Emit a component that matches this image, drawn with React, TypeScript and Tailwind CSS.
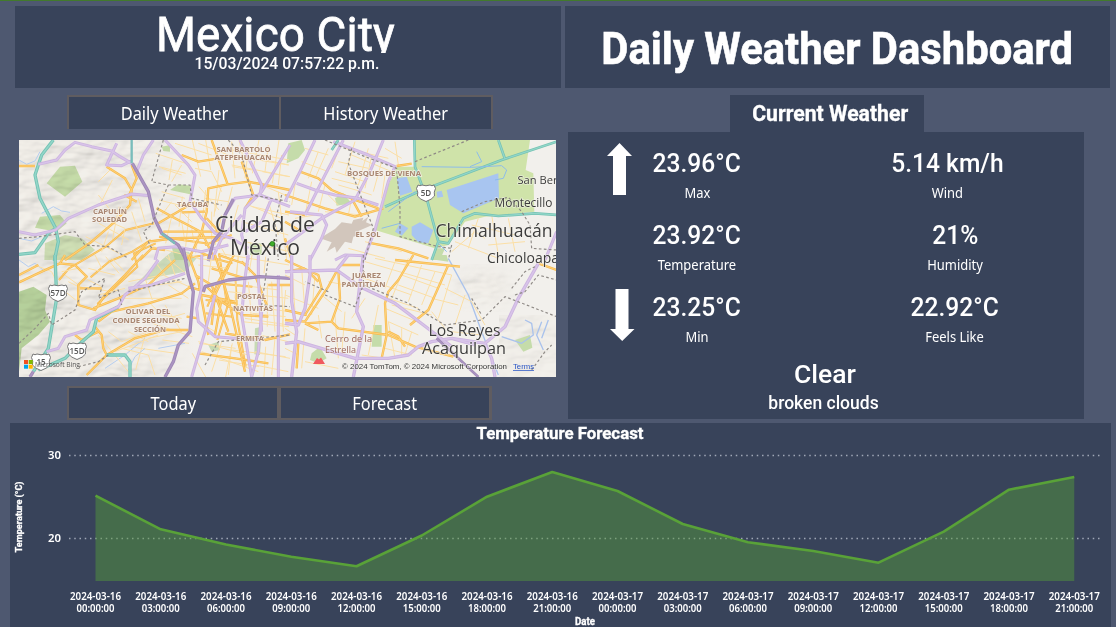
import React from "react";

const DIN = "font-[Roboto,sans-serif]";

const temps = [495.7, 529.3, 544.5, 556.7, 566.3, 535.5, 496.7, 472, 491, 524, 542.3, 551, 562.7, 531.7, 489.7, 477];
const hours = ["00", "03", "06", "09", "12", "15", "18", "21"];

type Stroke = { d: string; c: string; w: number; dash?: string };

const O = "#f8ba4c";
const L = "#cdb4e0";
const P = "#9f88b6";
const T = "#74c2b3";
const G = "#8f8a86";
const Y = "#fbdfa6";

const cores: Record<string, string> = {
  [O]: "#fdd078",
  [L]: "#d8c4e9",
  [P]: "#ab95c2",
  [T]: "#93d6c9",
};

const centre: Stroke[] = [
  { c: Y, w: 3, d: "M520 0L545 110M560 0L575 90M600 90L585 230M540 140L600 210M640 140L620 220M660 0L690 130M720 0L700 100M780 0L760 130M740 60L810 75M730 95L810 110M640 30L810 60M640 80L700 90M740 140L810 170M700 200L810 225M620 235L600 330M660 330L650 420M700 340L690 400M740 350L735 400M600 340L810 375M620 430L780 450M640 480L660 520M700 520L800 530M670 545L810 560M640 630L800 650M600 660L720 680M640 610L620 711M740 620L735 711M800 450L790 560M745 430V560M520 640L560 711M540 610L650 625M400 550L520 590M430 600L510 610M380 580L350 690M330 620L470 640M420 400L510 440M380 420L400 480M440 350L500 400M300 200L280 300M280 120L240 200M240 250L330 300M200 290L300 340M130 400L200 450M120 440L170 480M260 350L300 400M410 40L500 70M420 80L500 100M460 60L450 120M490 170L480 260M420 180L500 200M560 150L550 240M460 220L440 310M510 220L500 320M540 270L530 340M400 320L520 350" },
  { c: O, w: 6, d: "M120 420L150 385L210 350L260 320L320 270L405 250M215 412L270 365L340 335L395 300M235 492L290 440L355 380L345 340L410 310M600 340L625 500L595 600M645 345L600 420L565 500M565 350L640 370M560 480L650 490M560 520L640 530M650 420L655 540L680 680M590 430L700 440M420 290L560 310M540 335L600 360M500 355L560 345" },
];

const northWest: Stroke[] = [
  { c: "#b5cdf0", w: 3, d: "M12 75L35 88L60 78L75 50M80 235L115 215L140 228L165 232M12 310L50 318L80 305" },
  { c: Y, w: 3, d: "M540 100L590 110L620 170M550 25L640 60M480 25L590 60M500 90L470 140M440 100L500 120M440 170L510 190M570 190L640 200M620 150L600 230M640 60L820 90M650 90L825 125M700 40L690 130M760 30L750 110M800 60L790 150M650 20L660 130M470 200L440 240M480 210L530 260M370 190L390 260M350 230L380 320M290 100L250 140M250 180L290 230M260 250L330 280L320 330M280 290L260 350M500 260L510 320M530 280L540 340M590 230L590 340M620 240L600 330M500 350L560 375M620 340L640 375M670 210L650 280M760 200L790 300M700 210L800 250M680 260L820 300M690 320L825 350M790 170L815 375" },
  { c: O, w: 7, d: "M12 93H60M275 95L330 130L350 165L345 210L300 260L230 320L150 375M350 90L365 130L340 185M328 180L365 200M500 60L550 80L612 70M590 15L638 148L580 160L575 230L560 290M638 148L700 140L825 165M425 220L480 250L560 292L600 375M430 265L540 200M445 290L620 290M455 310L635 306M350 375L400 320L460 312M560 290L520 375M680 80L715 180L690 220M500 232L570 230M575 250L630 310M570 330L650 300M375 375L410 340L450 345" },
  { c: T, w: 10, d: "M115 15L80 60L60 120L75 190L122 280L130 320L118 378M12 358L60 353L100 295L122 280" },
  { c: L, w: 9, d: "M70 88L125 75L150 45L180 22L230 35L290 48L315 65L350 85M305 25L275 90L320 92L350 78M415 15L385 60L365 110M450 15L520 90L540 120L525 200L560 250L600 295L650 310L700 340M12 290L60 300L122 285L160 250L250 210L350 177L405 182M675 15L740 150L735 180L660 190L630 240M825 30L740 170L690 220L680 300L700 375M735 180L825 215M770 190L740 260L690 290M680 240L620 310L590 375M420 375L430 340L480 335L560 350L640 330" },
  { c: P, w: 10, d: "M352 85L400 170L418 250L440 295L490 330L515 378M655 192L630 240L620 290L595 320L580 378" },
  { c: "#7abdbb", w: 7, d: "M350 15V85M440 295L480 326" },
  { c: G, w: 3.5, dash: "8 7", d: "M445 15L410 140L460 150L430 220L410 270L385 290L410 340M460 150L525 150L530 190L620 210M640 15L680 60L710 180L825 200M12 310L70 305L180 290L210 330L280 335L340 370M800 180L780 260L790 375" },
];

const northEast: Stroke[] = [
  { c: Y, w: 3, d: "M170 20L140 100M210 20L180 120M250 40L220 150M60 40L130 60M50 80L130 110M35 120L20 210M80 140L60 240M120 150L100 230M160 80L250 100M150 110L240 140M160 150L230 170M230 170L260 180M200 60L320 110M180 40L310 70M300 40L350 70M330 20L340 90M30 250L90 240M120 230L230 240M190 340L300 370M240 320L350 350M500 350L570 290L600 310M510 320L640 370M560 270L690 300M620 240L640 360M580 250L550 340M670 250L690 350M610 330L720 320M130 180L160 210M260 60L240 160M290 80L265 170M300 120L290 190M140 130L220 150M100 50L70 130M130 40L90 130M200 190L190 240" },
  { c: O, w: 7, d: "M0 180L120 220L210 245L295 220M45 110L100 130L140 165L200 190M250 323L340 340L430 370M200 190L230 245M0 230L60 240M335 93L380 86M0 260L50 290M0 310L20 375M210 195L280 220" },
  { c: L, w: 9, d: "M90 15L45 110L0 200M175 15L120 120L60 240M295 15L255 110L210 195L110 250L0 330M35 145L90 165L150 180L220 190L280 210M145 20L250 60L330 95L310 140L285 230L270 285L235 375M15 230L110 240L125 270L110 310L75 375M150 375L180 360L240 362M815 290L780 375" },
  { c: T, w: 8, d: "M388 15L390 95L425 190L460 320L440 375M300 215L400 170L650 75L815 20M640 15L660 72M460 320L490 325L535 250L570 235L640 243L750 235L815 240M160 15L140 45" },
  { c: "#8dbce9", w: 3, d: "M410 95L560 97L650 92L665 105L655 130L630 135M575 50L590 80L555 95M460 325L485 350M310 230L390 170M290 280L345 265" },
  { c: G, w: 3.5, dash: "8 7", d: "M120 15L240 65L335 100L345 220L345 305L460 335L500 340M200 40L190 85L230 190L265 280L240 375M390 80L550 15M530 230L600 200L670 187L710 230L735 270L740 340L815 345M500 330L490 375" },
];

const southWest: Stroke[] = [
  { c: "#b5cdf0", w: 3, d: "M12 15L40 35L60 25L90 50M270 340L330 300L390 250M340 345L360 305L390 280M430 280L510 265" },
  { c: Y, w: 3, d: "M60 30L110 50L130 90M160 80L200 100M210 70L260 95M220 40L300 60M240 0L260 40M290 10L330 50M140 50L190 40M230 100L290 110M250 120L330 100M340 80L440 60M350 100L500 80M330 130L500 130M280 230L320 260L400 230M300 290L430 240M250 240L340 350M320 280L400 300L420 360M400 250L500 230M420 200L510 175M340 230L400 260M460 90L520 130M400 140L440 180L500 190M450 150L500 230M420 20L450 60M460 0L480 60M550 200L600 230M550 260L700 300M560 290L730 350M620 260L590 350M650 270L640 360M780 250L770 360M735 240L820 260M720 290L825 310M720 330L820 350M550 10L620 20M550 30L640 40M590 0L580 80M670 0L660 130M700 80L710 200M770 80L780 230M640 110L820 130M670 150L825 170M690 190L820 210M800 90L805 230" },
  { c: O, w: 7, d: "M12 82L80 50L135 25L180 30L215 65L190 90L190 150L240 165L270 120L330 60L385 0M135 25L150 0M235 160L310 130L400 90L480 15M195 100L260 100M12 60L70 30M240 215L260 240L265 280L275 300L215 360M275 300L360 250L450 225L520 225M250 200L290 170L400 145L500 115L540 85M180 240L200 255L250 230M520 0L550 80L580 240M600 0L640 130L690 350M650 15L600 120L590 210M570 90L620 140L680 180L760 185M560 120L660 140M590 40L690 70M680 20L720 60L755 150M540 60L590 90L640 230M620 130L600 240M760 90H825M630 235L750 255L825 238M550 295L660 310L760 325M610 0L700 30M520 95L570 110M515 185L550 190" },
  { c: T, w: 10, d: "M120 0L125 130L100 280L55 350M310 155L245 190L235 230L190 270L150 310L70 345M275 300L330 300L345 320L345 366" },
  { c: L, w: 9, d: "M430 15L390 70L330 120L310 155L225 195L215 225L150 245L130 280L95 290M340 100L410 90L510 55M560 0L560 100L545 160L550 200L600 245L720 255M700 0L690 70L680 180L710 366M730 0V70L740 230M740 170L730 290L710 366M790 60V366M600 120L570 230L530 366" },
  { c: P, w: 10, d: "M505 -20L520 60L535 110L525 230L490 270L475 320L450 366M565 110L570 95L640 75L735 65L825 70M55 350L45 366" },
  { c: G, w: 3.5, dash: "8 7", d: "M12 265L60 220L100 175L110 210L180 165L200 110L270 70L250 130L310 105L320 150M340 110L510 70M190 335L250 320L280 300M570 330L610 260L825 240M760 10L740 150L825 155" },
];

const southEast: Stroke[] = [
  { c: "#a9c2ec", w: 4, d: "M490 10L550 120L590 230L640 360M650 245L710 265L745 240L740 205L720 195M770 200L755 240L775 285M790 195L770 250" },
  { c: Y, w: 3, d: "M240 20L480 90M270 10L500 60M210 60L380 120M320 150L440 180M330 20L300 100M370 10L320 130M410 30L370 140M450 50L410 150M500 60L460 190M350 60L460 100M340 90L450 130M310 130L400 160M440 130L520 150M480 100L560 140L600 210M540 120L510 210M0 60L60 90M20 20L30 170M50 40L60 170M90 60L80 180M110 120L170 170M130 80L180 90M0 120L100 160M60 220L50 340M100 180L110 250M150 180L160 310M180 170L170 300M240 130L200 190M280 150L250 300M310 200L330 310M300 160L420 210M310 200L400 240M300 280L380 300M230 300L300 310M350 220L350 300M380 230L360 300M60 320L160 340M0 220L30 240M0 280L40 300M500 230L590 240M440 170L480 220" },
  { c: O, w: 7, d: "M330 15L525 35M385 0L340 75L310 110L300 145L305 240L290 310M490 30L430 165L375 210M225 30L165 30L130 95L60 200L0 195M160 45L165 130L140 200L60 205M0 165L65 180M0 15L100 60L110 100L60 180M140 200L160 220L310 240L390 275L505 305M60 205L100 225M310 230L340 245L360 275M40 265L35 340M760 25L815 45M70 50L100 80M0 50L60 40" },
  { c: L, w: 10, d: "M75 0V60L60 160L40 210L0 205M155 45L225 95L330 145L435 225L500 275M235 0L215 170L235 215L205 366M0 50L155 45L190 0M0 265L40 260L210 310L310 310L370 300L400 275L440 260L500 250L600 265L660 215L700 130L760 25M600 265L620 310L630 366M20 0L20 140L35 230L20 366M500 250L570 270" },
  { c: P, w: 8, d: "M455 250L520 310L580 366" },
  { c: G, w: 3.5, dash: "8 7", d: "M130 110L60 80M120 120L210 155L235 90L370 145L480 210L590 195L660 125L815 185M680 100L720 50L750 35M690 120L720 110L760 60L815 75M560 130L590 180M740 345L780 290L800 270M235 0V90" },
];

function Strokes({ list, t }: { list: Stroke[]; t: string }) {
  return (
    <g transform={t} fill="none" strokeLinejoin="round">
      {list.map((s, i) => (
        <g key={i}>
          <path d={s.d} stroke={s.c} strokeWidth={s.w} strokeDasharray={s.dash} />
          {cores[s.c] && <path d={s.d} stroke={cores[s.c]} strokeWidth={s.w * 0.45} />}
        </g>
      ))}
    </g>
  );
}

const NW = "translate(-4 -5) scale(.33333)";
const NE = "translate(266 -5) scale(.33333)";
const SW = "translate(-4 115) scale(.33333)";
const SE = "translate(266 115) scale(.33333)";

const districts: [string, number, number, number][] = [
  ["SAN BARTOLO", 224.5, 12, 54],
  ["ATEPEHUACAN", 224, 20, 57],
  ["TACUBA", 173.5, 67, 31],
  ["CAPULÍN", 91, 74, 34],
  ["SOLEDAD", 90.5, 82, 35],
  ["BOSQUES DE VIENA", 365, 36, 74],
  ["EL SOL", 349, 97, 25],
  ["JUÁREZ", 347.5, 138, 29],
  ["PANTITLÁN", 344.5, 146.5, 44],
  ["POSTAL", 232.5, 158.5, 29],
  ["NATIVITAS", 234, 170.5, 40],
  ["ERMITA", 231, 200.5, 28],
  ["OLIVAR DEL", 129, 174, 45],
  ["CONDE SEGUNDA", 127, 183, 67],
  ["SECCIÓN", 131, 191.5, 32],
];

const places: [string, number, number, number, number][] = [
  ["Ciudad de", 246, 91.5, 100, 21],
  ["México", 246, 115, 70, 21],
  ["Chimalhuacán", 475, 97, 117, 18.5],
  ["Los Reyes", 445.5, 195.5, 72, 16],
  ["Acaquilpan", 445, 213.5, 84, 16],
  ["Montecillo", 504.5, 67, 58, 11.8],
];

function Shield({ x, y, label }: { x: number; y: number; label: string }) {
  return (
    <g transform={`translate(${x} ${y})`}>
      <path d="M-8-8Q-6-6.500-4-8Q0-6.500 4-8Q6-6.500 8-8L9.500-4.500Q7.500-1 8.500 3Q6 6.500 0 8.500Q-6 6.500-8.500 3Q-7.500-1-9.500-4.500Z" fill="#fff" stroke="#777" strokeWidth="1" />
      <text y="2.800" textAnchor="middle" fontSize="8" fontWeight="600" fill="#555">{label}</text>
    </g>
  );
}

function CityMap() {
  return (
    <svg viewBox="0 0 537 237" className="block h-[237px] w-[537px] overflow-hidden font-['Open_Sans',sans-serif]">
      <defs>
        <filter id="relief" x="0" y="0" width="100%" height="100%">
          <feTurbulence type="fractalNoise" baseFrequency=".03 .06" numOctaves="3" seed="8" />
          <feDiffuseLighting surfaceScale="4" lightingColor="#f5f3ef" diffuseConstant="1.15">
            <feDistantLight azimuth="225" elevation="60" />
          </feDiffuseLighting>
        </filter>
        <filter id="soft"><feGaussianBlur stdDeviation="8" /></filter>
        <linearGradient id="fadeWest"><stop stopColor="#fff" /><stop offset=".65" stopColor="#fff" /><stop offset="1" stopColor="#000" /></linearGradient>
        <mask id="west"><rect width="175" height="237" fill="url(#fadeWest)" /></mask>
        <mask id="hills"><ellipse cx="465" cy="148" rx="28" ry="20" fill="#fff" filter="url(#soft)" /><rect x="480" y="175" width="57" height="62" fill="#aaa" /></mask>
      </defs>
      <rect width="537" height="237" fill="#f2f0ec" />
      <g transform={NW} fill="#c5dcaa">
        <path d="M135 95L180 92L202 140L150 185L95 145Z" />
        <path d="M75 245L135 240L155 265L125 290L60 278Z" />
        <path d="M90 325L150 300L200 310L240 345L200 375H88Z" opacity=".8" />
        <path d="M465 165L490 148L528 152L525 178Z" />
        <path d="M440 35L465 30L465 50L445 48ZM470 335L500 340L510 375H480ZM705 325H740V360H705Z" />
      </g>
      <g transform={SW} fill="#b5d09c">
        <path d="M12 110L55 95L95 120L90 165L105 200L70 240L20 280L12 350Z" />
        <path d="M365 85L400 50L440 15L470 -10L520 -10L545 10L510 50L430 65Z" opacity=".6" />
        <path d="M580 270L610 260L615 285L590 290ZM720 220L740 215L735 300L718 298Z" opacity=".7" />
      </g>
      <g mask="url(#west)" className="mix-blend-multiply"><rect width="185" height="237" filter="url(#relief)" opacity=".5" /></g>
      <g mask="url(#hills)" className="mix-blend-multiply"><rect x="420" y="110" width="117" height="127" filter="url(#relief)" opacity=".4" /></g>
      <g transform={NE}>
        <path d="M388 15H735L722 105L745 115L748 230L600 245L540 260L490 330L450 340L270 285L310 150L335 95H390Z" fill="#cfe3a9" />
        <path d="M10 25L50 15L60 45L40 70L5 85ZM150 190L175 175L200 205L155 212ZM450 340H480L465 375H440Z" fill="#c5dcaa" />
        <path d="M485 165L640 115L642 190L535 235L495 210Z" fill="#a8c5f0" />
        <path d="M335 130L365 125L382 170L345 182Z" fill="#a8c5f0" />
        <path d="M380 275L405 262L445 285L430 325L400 322L380 300ZM330 290L345 265L370 280L350 302ZM455 170L470 167L475 185L457 188Z" fill="#a8c5f0" />
        <path d="M105 310L150 282L170 262L200 266L205 255L235 248L232 258L250 245L243 262L262 270L220 288L232 297L205 305L200 325L180 320L155 353L150 335L125 350L140 322Z" fill="#d2c6bc" />
      </g>
      <g transform={SE}>
        <path d="M265 210H290V275H260ZM80 295L105 275L125 310L100 325L75 315ZM690 255L735 240L742 278L715 290ZM440 0H485L490 20L455 15Z" fill="#c5dcaa" />
      </g>
      <Strokes list={centre} t="scale(.33333)" />
      <Strokes list={northWest} t={NW} />
      <Strokes list={northEast} t={NE} />
      <Strokes list={southWest} t={SW} />
      <Strokes list={southEast} t={SE} />

      <Shield x={407} y={53} label="5D" />
      <Shield x={39} y={153} label="57D" />
      <Shield x={58} y={211} label="15D" />
      <Shield x={22} y={222} label="15" />

      <g textAnchor="middle" fontSize="7.8" fontWeight="700" fill="#a88671" stroke="#f7f3ee" strokeWidth="1.6" strokeOpacity=".8" paintOrder="stroke">
        {districts.map(([s, x, y, w]) => (
          <text key={s} x={x} y={y} textLength={w} lengthAdjust="spacingAndGlyphs">{s}</text>
        ))}
      </g>
      <g textAnchor="middle" fill="#3c3c3c" stroke="#f7f5f0" strokeWidth="1.6" strokeOpacity=".6" paintOrder="stroke">
        {places.map(([s, x, y, w, f]) => (
          <text key={s} x={x} y={y} fontSize={f} textLength={w} lengthAdjust="spacingAndGlyphs">{s}</text>
        ))}
        <text x="498.500" y="44" fontSize="11.5" textAnchor="start" textLength="40" lengthAdjust="spacingAndGlyphs">San Ber</text>
        <text x="468" y="122.5" fontSize="14" textAnchor="start" textLength="72" lengthAdjust="spacingAndGlyphs">Chicoloapa</text>
      </g>
      <g fill="#9b6258" fontSize="9" stroke="#f7f5f0" strokeWidth="1" strokeOpacity=".6" paintOrder="stroke">
        <text x="306" y="202" textLength="47" lengthAdjust="spacingAndGlyphs">Cerro de la</text>
        <text x="306" y="212.5" textLength="31" lengthAdjust="spacingAndGlyphs">Estrella</text>
      </g>
      <path d="M294 224L298 218L300 219.5L302 217.5L306 224Z" fill="#f0595f" />
      <circle cx="253.3" cy="103.8" r="2.4" fill="#3fae29" stroke="#25751a" strokeWidth=".8" />

      <path d="M5 220h4v4h-4z" fill="#f25022" />
      <path d="M9.700 220h4v4h-4z" fill="#7fba00" />
      <path d="M5 224.700h4v4h-4z" fill="#00a4ef" />
      <path d="M9.700 224.700h4v4h-4z" fill="#ffb900" />
      <text x="16" y="227" fontSize="7" textLength="45" lengthAdjust="spacingAndGlyphs" fill="#555">Microsoft Bing</text>
      <g className="font-['Liberation_Sans',sans-serif]" fontSize="7.5">
        <text x="323" y="229" textLength="165" lengthAdjust="spacingAndGlyphs" fill="#333" stroke="#f5f3f0" strokeWidth="1.2" strokeOpacity=".7" paintOrder="stroke">© 2024 TomTom, © 2024 Microsoft Corporation</text>
        <text x="494" y="229" textLength="21" lengthAdjust="spacingAndGlyphs" fill="#2a56c6" textDecoration="underline">Terms</text>
      </g>
    </svg>
  );
}

function Tabs({ left, right, layout }: { left: string; right: string; layout: string }) {
  return (
    <div className={`ml-[52px] grid h-[34px] border-2 border-[#5f5c60] bg-[#5f5c60] font-['Noto_Sans',sans-serif] text-[17.5px] ${layout}`}>
      <button className="bg-[#38435a]"><span className="inline-block scale-x-[.935]">{left}</span></button>
      <button className="bg-[#38435a]"><span className="inline-block scale-x-[.935]">{right}</span></button>
    </div>
  );
}

function Metric({ value, label }: { value: string; label: string }) {
  return (
    <div className="flex h-[72px] w-[140px] flex-col items-center">
      <div className={`${DIN} whitespace-nowrap pt-px text-[26px] font-medium leading-[36px]`}><span className="inline-block scale-x-[.945]">{value}</span></div>
      <div className="pt-[2px] font-['Noto_Sans',sans-serif] text-[13.5px] leading-[20px]"><span className="inline-block scale-x-[.96]">{label}</span></div>
    </div>
  );
}

function ForecastChart() {
  const x = (i: number) => 95.5 + i * 65.25;
  const line = temps.map((y, i) => `${x(i)},${y}`).join(" ");
  return (
    <svg viewBox="10 423 1101 204" className="block h-[204px] w-[1101px] font-['Noto_Sans',sans-serif]">
      <g stroke="#9fa7b6" strokeWidth="1.3" strokeDasharray="1.5 3.75">
        <path d="M69 455.500H1100M69 538.500H1100" />
      </g>
      <polygon points={`95.5,581 ${line} 1074.25,581`} fill="#549c3a" fillOpacity=".46" />
      <polyline points={line} fill="none" stroke="#59a238" strokeWidth="2.6" strokeLinejoin="round" />
      <g fill="#fff" textAnchor="middle" fontWeight="600">
        <text x="54.500" y="459" fontSize="11" textLength="13" lengthAdjust="spacingAndGlyphs">30</text>
        <text x="54.500" y="542" fontSize="11" textLength="13" lengthAdjust="spacingAndGlyphs">20</text>
        {temps.map((_, i) => (
          <g key={i} fontSize="9.8">
            <text x={x(i)} y="600" textLength="51" lengthAdjust="spacingAndGlyphs">{i < 8 ? "2024-03-16" : "2024-03-17"}</text>
            <text x={x(i)} y="612" textLength="38" lengthAdjust="spacingAndGlyphs">{`${hours[i % 8]}:00:00`}</text>
          </g>
        ))}
      </g>
      <g className={DIN} fill="#fff" stroke="#fff" strokeWidth=".3" textAnchor="middle" fontWeight="700">
        <text x="560" y="439" fontSize="16.500" textLength="167" lengthAdjust="spacingAndGlyphs">Temperature Forecast</text>
        <text x="585" y="624.500" fontSize="10" textLength="20" lengthAdjust="spacingAndGlyphs">Date</text>
        <text transform="translate(22 517) rotate(-90)" fontSize="9.8" textLength="71" lengthAdjust="spacingAndGlyphs">Temperature (°C)</text>
      </g>
    </svg>
  );
}

export default function App() {
  return (
    <div className="h-[627px] w-[1116px] overflow-hidden border-t border-[#427a2c] bg-[#4e5870] text-white">
      <header className="flex gap-1 pl-[15px] pt-[5px]">
        <div className="flex h-[82px] w-[546px] flex-col items-center bg-[#38435a]">
          <div className="h-[47px] overflow-hidden pr-[25px]">
            <h1 className={`${DIN} whitespace-nowrap text-[48px] leading-[57px]`}><span className="inline-block scale-x-[.953] tracking-[.2px] [-webkit-text-stroke:.8px_#fff]">Mexico City</span></h1>
          </div>
          <div className={`${DIN} whitespace-nowrap pr-[2px] text-[17px] font-medium leading-[20px]`}><span className="inline-block scale-x-[.925]">15/03/2024 07:57:22 p.m.</span></div>
        </div>
        <div className="flex h-[82px] w-[545px] items-center justify-center bg-[#38435a]">
          <h2 className={`${DIN} whitespace-nowrap pt-[3px] text-[45px] font-bold leading-[56px]`}><span className="inline-block scale-x-[.928] [-webkit-text-stroke:.6px_#fff]">Daily Weather Dashboard</span></h2>
        </div>
      </header>

      <main className="flex h-[335px] pl-[15px] pt-[7px]">
        <section className="flex w-[553px] flex-col">
          <div className="w-[478px]"><Tabs left="Daily Weather" right="History Weather" layout="grid-cols-[210px_210px] gap-[2px] leading-[32px]" /></div>
          <div className="ml-1 mt-[11px] w-[537px]"><CityMap /></div>
          <div className="mt-[9px] w-[477px]"><Tabs left="Today" right="Forecast" layout="grid-cols-[208px_208px] gap-[4px] leading-[29px]" /></div>
        </section>
        <section className="w-[516px]">
          <h3 className={`${DIN} ml-[162px] h-[37px] w-[194px] bg-[#38435a] pl-[6px] text-center text-[21.500px] font-bold leading-[38px]`}><span className="inline-block whitespace-nowrap scale-x-[.985] [-webkit-text-stroke:.3px_#fff]">Current Weather</span></h3>
          <div className="h-[287px] bg-[#38435a] pt-[12px]">
            <div className="flex h-[216px]">
              <div className="flex w-[59px] flex-col justify-start pl-[39px]">
                <svg viewBox="0 0 25 52" className="h-[52px] w-[25px] shrink-0 overflow-visible"><path d="M12.500-1L25 12H19V51H6V12H0Z" fill="#fff" /></svg>
                <svg viewBox="0 0 25 52" className="ml-[3px] mt-[93px] h-[52px] w-[25px] shrink-0 overflow-visible"><path d="M5.500 0H18.500V40H24.500L12.200 52L0 40H5.500Z" fill="#fff" /></svg>
              </div>
              <div className="flex w-[140px] flex-col">
                <Metric value="23.96°C" label="Max" />
                <Metric value="23.92°C" label="Temperature" />
                <Metric value="23.25°C" label="Min" />
              </div>
              <div className="ml-[110px] flex flex-col">
                <Metric value="5.14 km/h" label="Wind" />
                <div className="pl-2">
                  <Metric value="21%" label="Humidity" />
                  <Metric value="22.92°C" label="Feels Like" />
                </div>
              </div>
            </div>
            <div className={`${DIN} flex w-[514px] flex-col items-center font-medium`}>
              <div className="text-[26.500px] leading-[28px]">Clear</div>
              <div className="pr-[3px] pt-[3px] text-[17.500px] leading-[24px]">broken clouds</div>
            </div>
          </div>
        </section>
      </main>
      <section className="ml-[10px] h-[204px] w-[1101px] bg-[#38435a]"><ForecastChart /></section>
    </div>
  );
}
